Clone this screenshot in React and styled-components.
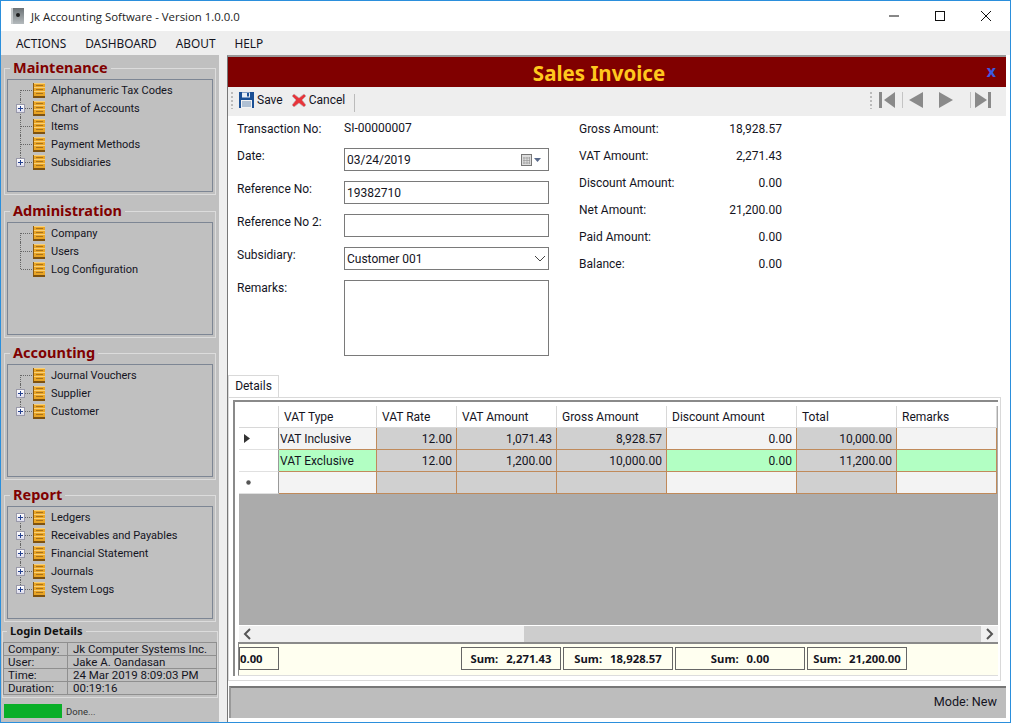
import React from 'react'
import styled, { createGlobalStyle } from 'styled-components'

const Global = createGlobalStyle`
    html, body { margin: 0; padding: 0; background: #fff; }
    * { box-sizing: border-box; }
    body { font-family: Roboto, "Noto Sans", sans-serif; font-size: 12px; color: #14141e; }
`

const Window = styled.div`
    width: 1011px;
    height: 723px;
    display: flex;
    flex-direction: column;
    border: 1px solid #2b8fdc;
    overflow: hidden;
    background: #fff;
`

const TitleBar = styled.div`
    height: 30px;
    flex: none;
    display: flex;
    align-items: center;
    padding: 0 1px 0 10px;
    font-family: "Open Sans", "Noto Sans", sans-serif;
    font-size: 11.4px;
    color: #222;
`

const TitleText = styled.span`
    margin-left: 7px;
    flex: 1;
`

const WinButton = styled.div`
    width: 46px;
    height: 30px;
    display: flex;
    align-items: center;
    justify-content: center;
`

const MenuBar = styled.div`
    height: 24px;
    flex: none;
    display: flex;
    align-items: center;
    background: #eeeeee;
    padding-left: 15px;
    gap: 19px;
    font-family: "Noto Sans", sans-serif;
    font-size: 11.85px;
`

const Body = styled.div`
    flex: 1;
    min-height: 0;
    display: flex;
    background: #fff;
`

const Sidebar = styled.div`
    width: 226px;
    flex: none;
    background: #c0c0c0;
    border-right: 8px solid #eeeeee;
    display: flex;
    flex-direction: column;
    padding-top: 3px;
`

const Section = styled.fieldset`
    margin: 0 3px ${p => p.$mb}px 3px;
    padding: 0 2px 2px 2px;
    height: 137px;
    flex: none;
    border: 1px solid #dcdcdc;
    min-width: 0;
`

const Legend = styled.legend`
    margin-left: 3px;
    padding: 0 3px 2px 3px;
    font-family: "Noto Sans", sans-serif;
    font-size: 14.5px;
    line-height: 18px;
    font-weight: bold;
    color: #800000;
`

const TreeBox = styled.div`
    height: 113px;
    margin-top: 1px;
    border: 1px solid #7d8694;
    padding-top: 1px;
`

const TreeRow = styled.div`
    position: relative;
    height: 18px;
    display: flex;
    align-items: center;
    padding-left: 25px;
    &::before {
        content: '';
        position: absolute;
        left: 12px;
        top: ${p => (p.$first ? '9px' : '0')};
        height: ${p => (p.$last || p.$first ? '9px' : '18px')};
        border-left: 1px dotted #666;
    }
    &::after {
        content: '';
        position: absolute;
        left: 13px;
        top: 9px;
        width: 11px;
        border-top: 1px dotted #666;
    }
`

const Plus = styled.span`
    position: absolute;
    left: 8px;
    top: 5px;
    width: 9px;
    height: 9px;
    z-index: 1;
    background: linear-gradient(#fff, #dde);
    border: 1px solid #99a;
    &::before {
        content: '';
        position: absolute;
        left: 1px;
        top: 3px;
        width: 5px;
        height: 1px;
        background: #23408e;
    }
    &::after {
        content: '';
        position: absolute;
        left: 3px;
        top: 1px;
        width: 1px;
        height: 5px;
        background: #23408e;
    }
`

const TreeLabel = styled.span`
    margin-left: 6px;
    font-size: 11px;
    white-space: nowrap;
`

const LoginBox = styled.fieldset`
    margin: 0 1px;
    padding: 0;
    height: 74px;
    flex: none;
    border: 1px solid #dcdcdc;
    min-width: 0;
`

const LoginLegend = styled.legend`
    margin-left: 4px;
    padding: 0 3px;
    font-family: "Noto Sans", sans-serif;
    font-size: 11.2px;
    line-height: 14px;
    font-weight: bold;
    color: #111;
`

const LoginTable = styled.div`
    display: grid;
    grid-template-columns: 64px minmax(0, 1fr);
    margin-top: 4px;
    border-top: 1px solid #8f8f8f;
    border-left: 1px solid #8f8f8f;
`

const LoginCell = styled.div`
    height: 13px;
    line-height: 13px;
    font-size: 11.5px;
    padding-left: ${p => p.$pad}px;
    border-right: 1px solid #8f8f8f;
    border-bottom: 1px solid #8f8f8f;
    white-space: nowrap;
`

const ProgressRow = styled.div`
    display: flex;
    align-items: center;
    gap: 4px;
    padding: 6px 0 0 3px;
    font-size: 9.5px;
    color: #333;
`

const ProgressBar = styled.div`
    width: 58px;
    height: 14px;
    background: #0aaf28;
`

const Main = styled.div`
    margin-right: 4px;
    flex: 1;
    min-width: 0;
    display: flex;
    flex-direction: column;
    background: #fff;
    border-left: 1px solid #777;
    border-top: 2px solid #999;
`

const Header = styled.div`
    position: relative;
    height: 30px;
    flex: none;
    background: #800000;
    color: #ffc81e;
    font-family: "Noto Sans", sans-serif;
    font-size: 20.5px;
    font-weight: bold;
    line-height: 32px;
    text-align: center;
    padding-right: 36px;
`

const CloseX = styled.span`
    position: absolute;
    right: 10px;
    top: 0;
    line-height: 29px;
    color: #3c5ae0;
    font-size: 16px;
    font-weight: bold;
`

const Toolbar = styled.div`
    height: 29px;
    flex: none;
    background: #eeeeee;
    display: flex;
    align-items: center;
    padding: 0 0 3px 3px;
    font-size: 12px;
`

const Grip = styled.span`
    width: 2px;
    height: 17px;
    margin-right: 6px;
    background: repeating-linear-gradient(#bbb 0 2px, transparent 2px 4px);
`

const ToolButton = styled.span`
    display: flex;
    align-items: center;
    gap: 3px;
    margin-right: 9px;
`

const ToolSep = styled.span`
    width: 1px;
    height: 18px;
    background: #bbb;
    margin-top: 5px;
`

const NavGroup = styled.div`
    margin-left: auto;
    margin-right: 15px;
    display: flex;
    align-items: center;
`

const NavSlot = styled.span`
    display: flex;
    margin-left: ${p => p.$ml}px;
`

const NavSep = styled.span`
    width: 1px;
    height: 16px;
    margin-left: ${p => p.$ml}px;
    background: #c4c4c4;
`

const Form = styled.div`
    height: 259px;
    flex: none;
    display: flex;
    padding-left: 9px;
`

const LeftColumn = styled.div`
    width: 342px;
    padding-top: 5px;
`

const FieldRow = styled.div`
    display: flex;
    margin-bottom: ${p => p.$mb}px;
`

const Label = styled.div`
    width: 107px;
    flex: none;
    line-height: 16px;
`

const Input = styled.div`
    width: 205px;
    height: ${p => p.$h || 23}px;
    border: 1px solid #7a7a7a;
    display: flex;
    align-items: center;
    justify-content: space-between;
    padding: 0 6px 0 2px;
    line-height: 16px;
`

const ChevronSlot = styled.span`
    display: flex;
    margin-right: -4px;
`

const RightColumn = styled.div`
    width: 203px;
    margin-top: -1px;
`

const AmountRow = styled.div`
    height: 27px;
    display: flex;
    align-items: center;
    justify-content: space-between;
`

const TabStrip = styled.div`
    height: 22px;
    flex: none;
    display: flex;
    align-items: flex-end;
`

const Tab = styled.div`
    width: 51px;
    height: 22px;
    text-align: center;
    line-height: 20px;
    border: 1px solid #d9d9d9;
    border-bottom: none;
    background: #fff;
`

const TabPage = styled.div`
    flex: 1;
    min-height: 0;
    display: flex;
    margin-right: 5px;
    border: 1px solid #d9d9d9;
    padding: 2px 2px 4px 4px;
`

const GridFrame = styled.div`
    flex: 1;
    min-width: 0;
    display: flex;
    flex-direction: column;
    border-top: 2px solid #8a8a8a;
    border-left: 2px solid #8a8a8a;
    padding: 4px 0 0 3px;
`

const GridArea = styled.div`
    flex: 1;
    min-height: 0;
    background: #ababab;
    margin-left: 1px;
`

const Rows = styled.div`
    display: grid;
    grid-template-columns: 40px 98px 80px 100px 110px 130px 100px 100px;
    grid-auto-rows: 22px;
`

const HeadCell = styled.div`
    background: #fff;
    display: flex;
    align-items: center;
    padding-left: 5px;
    border-right: 1px solid #d8d8d8;
    border-bottom: 1px solid #d8d8d8;
`

const RowHead = styled.div`
    background: #fff;
    border-right: 1px solid #999;
    border-bottom: 1px solid #e0e0e0;
    display: flex;
    align-items: center;
    justify-content: center;
    padding-right: 20px;
`

const RowArrow = styled.svg`
    margin-right: 4px;
`

const Cell = styled.div`
    display: flex;
    align-items: center;
    justify-content: ${p => (p.$right ? 'flex-end' : 'flex-start')};
    padding: 0 4px 0 1px;
    background: ${p => p.$bg};
    border-right: 1px solid #c08a5a;
    border-bottom: 1px solid #c08a5a;
    white-space: nowrap;
`

const ScrollBar = styled.div`
    height: 17px;
    flex: none;
    display: flex;
    margin-left: 1px;
    background: #f0f0f0;
    border-top: 1px solid #fff;
`

const ScrollEnd = styled.div`
    width: 17px;
    display: flex;
    align-items: center;
    justify-content: center;
`

const ScrollTrack = styled.div`
    flex: 1;
    padding-left: 268px;
`

const ScrollThumb = styled.div`
    height: 100%;
    background: #cdcdcd;
`

const SummaryBar = styled.div`
    height: 34px;
    flex: none;
    display: flex;
    align-items: center;
    padding-bottom: 2px;
    background: #fffff0;
    border-top: 2px solid #8a8a8a;
    border-left: 1px solid #8a8a8a;
    border-bottom: 1px solid #ddd;
    font-family: "Noto Sans", sans-serif;
    font-weight: bold;
    font-size: 11.3px;
`

const SumBox = styled.div`
    width: ${p => p.$w}px;
    height: 23px;
    margin-left: ${p => p.$ml}px;
    border: 1px solid #666;
    display: flex;
    align-items: center;
    justify-content: ${p => (p.$left ? 'flex-start' : 'center')};
    gap: 8px;
    white-space: pre;
`

const StatusBar = styled.div`
    height: 32px;
    flex: none;
    margin: 5px 0 4px 1px;
    background: #bdbdbd;
    border-top: 2px solid #777;
    border-left: 2px solid #999;
    display: flex;
    align-items: center;
    justify-content: flex-end;
    padding: 0 9px 3px 0;
    font-size: 12.6px;
`

const Cabinet = () => (
    <svg width="12" height="15" viewBox="0 0 12 15">
        <rect width="12" height="15" fill="#8a5a10" />
        <rect x="1" y="0" width="11" height="13" fill="#e9a526" />
        <path d="M1 .5h11M1 4.5h11M1 8.5h11" stroke="#f9d078" />
        <path d="M3 2.5h7M3 6.5h7M3 10.5h7" stroke="#a8721a" />
        <rect y="13" width="12" height="2" fill="#7e5210" />
    </svg>
)

const AppIcon = () => (
    <svg width="13" height="16" viewBox="0 0 13 16">
        <defs>
            <linearGradient id="appIconFill" x1="0" y1="0" x2="0" y2="1">
                <stop offset="0" stopColor="#6c7276" />
                <stop offset="1" stopColor="#b4babd" />
            </linearGradient>
        </defs>
        <rect width="13" height="16" fill="url(#appIconFill)" />
        <rect width="2" height="16" fill="#c8ccce" />
        <circle cx="7" cy="7" r="2" fill="#1c1c1c" />
    </svg>
)

const SaveIcon = () => (
    <svg width="15" height="16" viewBox="0 0 15 16">
        <rect width="15" height="16" fill="#1a4f94" />
        <rect x="3" y="0.5" width="8" height="5" fill="#e8eef5" />
        <rect x="8" y="1" width="2" height="3.5" fill="#1a4f94" />
        <rect x="2" y="8" width="11" height="8" fill="#f2f2f2" />
        <path d="M3 10h9M3 12h9M3 14h9" stroke="#6f8fb5" />
    </svg>
)

const CancelIcon = () => (
    <svg width="14" height="14" viewBox="0 0 14 14">
        <path d="M2 1l5 4 5-4 2 2-4 4 4 5-2 2-5-4-5 4-2-2 4-5-4-4z" fill="#e8343a" stroke="#b8b8b8" strokeWidth="0.6" />
    </svg>
)

const CalendarIcon = () => (
    <svg width="21" height="12" viewBox="0 0 21 12">
        <rect x="0.5" y="0.5" width="10" height="11" fill="#ddd" stroke="#777" />
        <path d="M3 3v7M6 3v7M8.5 3v7M2 4h7M2 6.5h7M2 9h7" stroke="#999" strokeWidth="0.7" />
        <path d="M13 4h7l-3.5 4z" fill="#5a6a8a" />
    </svg>
)

const Chevron = ({ dir = 'down', color = '#444' }) => {
    const d = { down: 'M1 1l5 5 5-5', left: 'M7 1L2 6l5 5', right: 'M2 1l5 5-5 5' }[dir]
    return (
        <svg width={dir === 'down' ? 12 : 9} height={dir === 'down' ? 7 : 12} viewBox={dir === 'down' ? '0 0 12 7' : '0 0 9 12'}>
            <path d={d} fill="none" stroke={color} strokeWidth={dir === 'down' ? 1 : 2} />
        </svg>
    )
}

const NavIcon = ({ type }) => {
    const shapes = {
        first: <><rect x="0" y="0" width="3" height="16" /><path d="M5 8l11-8v16z" /></>,
        prev: <path d="M1 8l14-8v16z" />,
        next: <path d="M15 8L1 0v16z" />,
        last: <><rect x="13" y="0" width="3" height="16" /><path d="M12 8L0 0v16z" /></>,
    }
    return <svg width="16" height="16" viewBox="0 0 16 16" fill="#8a8a8a">{shapes[type]}</svg>
}

const sections = [
    { title: 'Maintenance', mb: 6, items: [['Alphanumeric Tax Codes'], ['Chart of Accounts', 1], ['Items'], ['Payment Methods'], ['Subsidiaries', 1]] },
    { title: 'Administration', mb: 5, items: [['Company'], ['Users'], ['Log Configuration']] },
    { title: 'Accounting', mb: 5, items: [['Journal Vouchers'], ['Supplier', 1], ['Customer', 1]] },
    { title: 'Report', mb: 2, items: [['Ledgers', 1], ['Receivables and Payables', 1], ['Financial Statement', 1], ['Journals', 1], ['System Logs', 1]] },
]

const login = [
    ['Company:', 'Jk Computer Systems Inc.'],
    ['User:', 'Jake A. Oandasan'],
    ['Time:', '24 Mar 2019 8:09:03 PM'],
    ['Duration:', '00:19:16'],
]

const amounts = [
    ['Gross Amount:', '18,928.57'],
    ['VAT Amount:', '2,271.43'],
    ['Discount Amount:', '0.00'],
    ['Net Amount:', '21,200.00'],
    ['Paid Amount:', '0.00'],
    ['Balance:', '0.00'],
]

const columns = ['VAT Type', 'VAT Rate', 'VAT Amount', 'Gross Amount', 'Discount Amount', 'Total', 'Remarks']

const rows = [
    { head: 'arrow', green: false, cells: ['VAT Inclusive', '12.00', '1,071.43', '8,928.57', '0.00', '10,000.00', ''] },
    { head: '', green: true, cells: ['VAT Exclusive', '12.00', '1,200.00', '10,000.00', '0.00', '11,200.00', ''] },
    { head: 'star', green: false, cells: ['', '', '', '', '', '', ''] },
]

// grey columns are read only, the others take input
const editable = [true, false, false, false, true, false, true]

const cellColor = (row, i) => {
    if (editable[i]) return row.green ? '#b2ffc3' : '#f3f3f3'
    return '#d0d0d0'
}

const App = () => (
    <Window>
        <Global />
        <TitleBar>
            <AppIcon />
            <TitleText>Jk Accounting Software - Version 1.0.0.0</TitleText>
            <WinButton>
                <svg width="10" height="10" viewBox="0 0 10 10"><path d="M0 5h10" stroke="#111" /></svg>
            </WinButton>
            <WinButton>
                <svg width="10" height="10" viewBox="0 0 10 10"><rect x="0.5" y="0.5" width="9" height="9" fill="none" stroke="#111" /></svg>
            </WinButton>
            <WinButton>
                <svg width="10" height="10" viewBox="0 0 10 10"><path d="M0 0l10 10M10 0L0 10" stroke="#111" /></svg>
            </WinButton>
        </TitleBar>
        <MenuBar>
            <span>ACTIONS</span>
            <span>DASHBOARD</span>
            <span>ABOUT</span>
            <span>HELP</span>
        </MenuBar>
        <Body>
            <Sidebar>
                {sections.map(s => (
                    <Section key={s.title} $mb={s.mb}>
                        <Legend>{s.title}</Legend>
                        <TreeBox>
                            {s.items.map(([name, plus], i) => (
                                <TreeRow key={name} $first={i === 0} $last={i === s.items.length - 1}>
                                    {plus && <Plus />}
                                    <Cabinet />
                                    <TreeLabel>{name}</TreeLabel>
                                </TreeRow>
                            ))}
                        </TreeBox>
                    </Section>
                ))}
                <LoginBox>
                    <LoginLegend>Login Details</LoginLegend>
                    <LoginTable>
                        {login.map(([k, v]) => (
                            <React.Fragment key={k}>
                                <LoginCell $pad={4}>{k}</LoginCell>
                                <LoginCell $pad={5}>{v}</LoginCell>
                            </React.Fragment>
                        ))}
                    </LoginTable>
                </LoginBox>
                <ProgressRow>
                    <ProgressBar />
                    <span>Done...</span>
                </ProgressRow>
            </Sidebar>
            <Main>
                <Header>
                    Sales Invoice
                    <CloseX>x</CloseX>
                </Header>
                <Toolbar>
                    <Grip />
                    <ToolButton><SaveIcon />Save</ToolButton>
                    <ToolButton><CancelIcon />Cancel</ToolButton>
                    <ToolSep />
                    <NavGroup>
                        <Grip />
                        <NavSlot $ml={1}><NavIcon type="first" /></NavSlot>
                        <NavSep $ml={7} />
                        <NavSlot $ml={5}><NavIcon type="prev" /></NavSlot>
                        <NavSlot $ml={14}><NavIcon type="next" /></NavSlot>
                        <NavSep $ml={16} />
                        <NavSlot $ml={4}><NavIcon type="last" /></NavSlot>
                    </NavGroup>
                </Toolbar>
                <Form>
                    <LeftColumn>
                        <FieldRow $mb={11}><Label>Transaction No:</Label><span>SI-00000007</span></FieldRow>
                        <FieldRow $mb={10}><Label>Date:</Label><Input>03/24/2019<CalendarIcon /></Input></FieldRow>
                        <FieldRow $mb={10}><Label>Reference No:</Label><Input>19382710</Input></FieldRow>
                        <FieldRow $mb={10}><Label>Reference No 2:</Label><Input /></FieldRow>
                        <FieldRow $mb={10}><Label>Subsidiary:</Label><Input>Customer 001<ChevronSlot><Chevron /></ChevronSlot></Input></FieldRow>
                        <FieldRow $mb={0}><Label>Remarks:</Label><Input $h={76} /></FieldRow>
                    </LeftColumn>
                    <RightColumn>
                        {amounts.map(([k, v]) => (
                            <AmountRow key={k}><span>{k}</span><span>{v}</span></AmountRow>
                        ))}
                    </RightColumn>
                </Form>
                <TabStrip><Tab>Details</Tab></TabStrip>
                <TabPage>
                    <GridFrame>
                        <GridArea>
                            <Rows>
                                <HeadCell />
                                {columns.map(c => <HeadCell key={c}>{c}</HeadCell>)}
                                {rows.map((row, r) => (
                                    <React.Fragment key={r}>
                                        <RowHead>
                                            {row.head === 'arrow' && (
                                                <RowArrow width="6" height="9" viewBox="0 0 6 9"><path d="M0 0l6 4.5L0 9z" fill="#333" /></RowArrow>
                                            )}
                                            {row.head === 'star' && (
                                                <svg width="5" height="5" viewBox="0 0 5 5"><circle cx="2.5" cy="2.5" r="2.2" fill="#555" /></svg>
                                            )}
                                        </RowHead>
                                        {row.cells.map((c, i) => (
                                            <Cell key={i} $right={i > 0} $bg={cellColor(row, i)}>{c}</Cell>
                                        ))}
                                    </React.Fragment>
                                ))}
                            </Rows>
                        </GridArea>
                        <ScrollBar>
                            <ScrollEnd><Chevron dir="left" color="#555" /></ScrollEnd>
                            <ScrollTrack><ScrollThumb /></ScrollTrack>
                            <ScrollEnd><Chevron dir="right" color="#555" /></ScrollEnd>
                        </ScrollBar>
                        <SummaryBar>
                            <SumBox $w={40} $ml={0} $left>0.00</SumBox>
                            <SumBox $w={100} $ml={182}><span>Sum:</span><span>2,271.43</span></SumBox>
                            <SumBox $w={110} $ml={2}><span>Sum:</span><span>18,928.57</span></SumBox>
                            <SumBox $w={130} $ml={2}><span>Sum:</span><span>0.00</span></SumBox>
                            <SumBox $w={100} $ml={2}><span>Sum:</span><span>21,200.00</span></SumBox>
                        </SummaryBar>
                    </GridFrame>
                </TabPage>
                <StatusBar>Mode: New</StatusBar>
            </Main>
        </Body>
    </Window>
)

export default App
